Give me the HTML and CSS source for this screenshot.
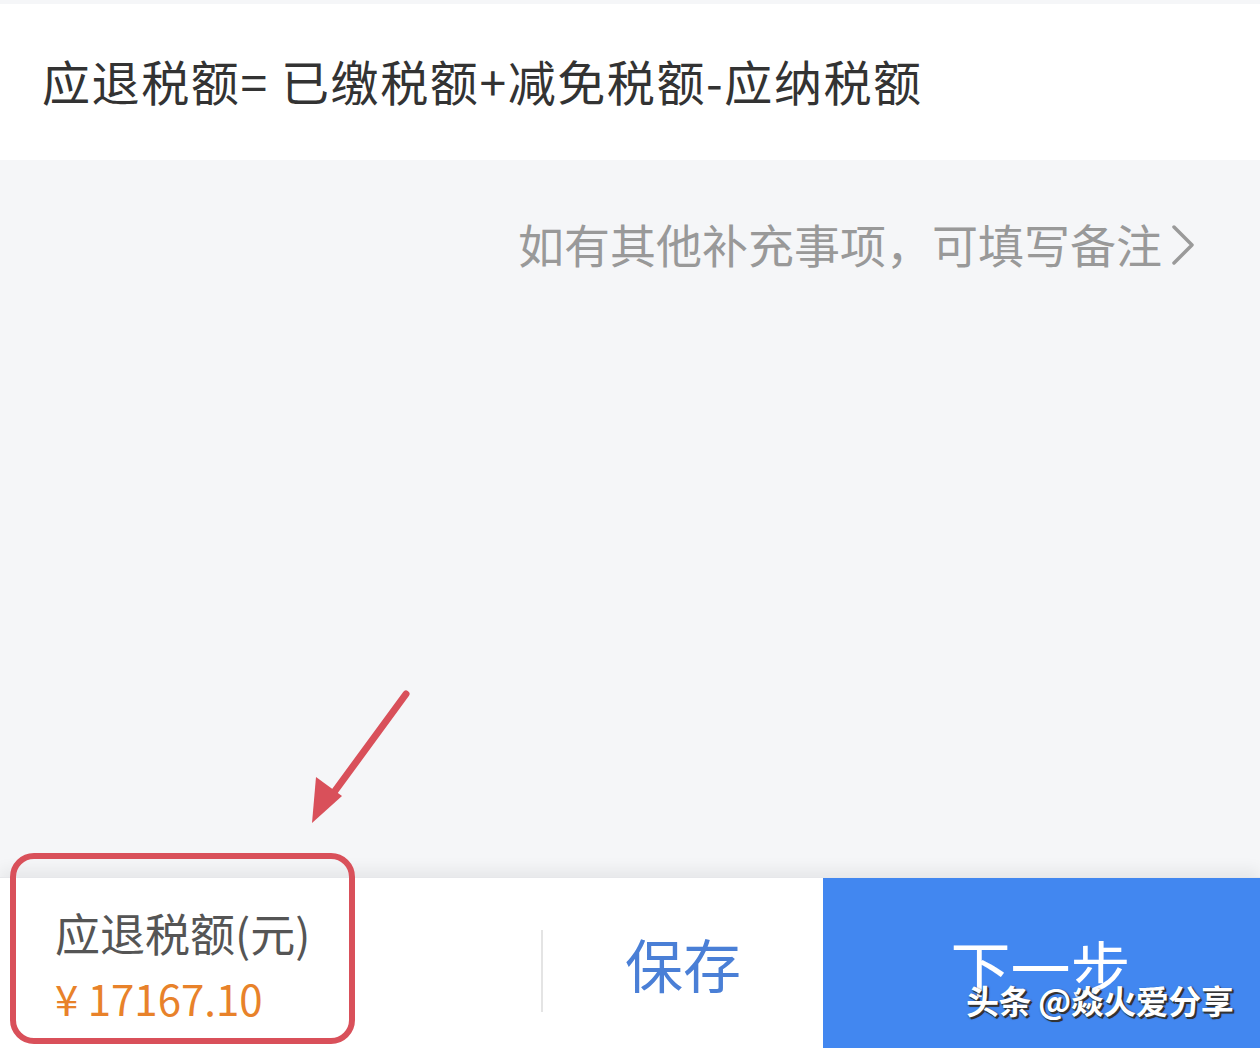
FILE: index.html
```html
<!DOCTYPE html>
<html lang="zh-CN">
<head>
    <meta charset="UTF-8">
    <meta name="viewport" content="width=device-width, initial-scale=1.0">
    <title>应退税额</title>
    <link rel="stylesheet" href="styles.css">
</head>
<body>
    <div class="page">
        <div class="formula">
            <p>应退税额= 已缴税额+减免税额-应纳税额</p>
        </div>

        <div class="content">
            <div class="note">
                <span>如有其他补充事项，可填写备注</span>
                <svg class="chevron" width="26" height="40" viewBox="0 0 26 40">
                    <path d="M4 2 L22 20 L4 38" fill="none" stroke="#9a9a9a" stroke-width="3.5" stroke-linecap="round" stroke-linejoin="round"/>
                </svg>
            </div>
        </div>

        <div class="bottom-bar">
            <div class="refund">
                <div class="refund-label">应退税额(元)</div>
                <div class="refund-amount">¥ 17167.10</div>
            </div>
            <div class="save">
                <span>保存</span>
            </div>
            <div class="next">
                <span>下一步</span>
            </div>
        </div>

        <!-- annotation overlays -->
        <svg class="arrow" width="120" height="150" viewBox="0 0 120 150">
            <line x1="114" y1="14" x2="40" y2="115" stroke="#d9505a" stroke-width="7" stroke-linecap="round"/>
            <polygon points="20,143 24,97 50,116" fill="#d9505a"/>
        </svg>
        <div class="highlight"></div>
        <div class="watermark">头条 @焱火爱分享</div>
    </div>
</body>
</html>
```

FILE: styles.css
```css
* {
    box-sizing: border-box;
    margin: 0;
    padding: 0;
}

body {
    font-family: "Noto Sans CJK SC", "Noto Sans", sans-serif;
    background: #f5f6f8;
    width: 1260px;
    height: 1048px;
    overflow: hidden;
}

.page {
    position: relative;
    height: 1048px;
    display: flex;
    flex-direction: column;
    padding-top: 4px;
}

.formula {
    background: #fff;
    height: 156px;
    display: flex;
    align-items: center;
    padding-left: 42px;
}

.formula p {
    font-size: 48px;
    color: #333;
    letter-spacing: 1.6px;
    margin-top: -4px;
}

.content {
    flex: 1;
    padding-top: 50px;
    padding-right: 64px;
}

.note {
    display: flex;
    justify-content: flex-end;
    align-items: center;
    gap: 8px;
    color: #999;
    font-size: 46px;
}

.chevron {
    margin-top: 4px;
}

.bottom-bar {
    height: 171px;
    display: flex;
    background: #fff;
    box-shadow: 0 -8px 14px rgba(0, 0, 0, 0.06);
    border-top: 1px solid #e6e7ea;
}

.refund {
    width: 541px;
    padding: 26px 0 0 55px;
}

.refund-label {
    font-size: 45px;
    color: #555;
    line-height: 1.3;
}

.refund-amount {
    font-size: 42px;
    color: #e8822a;
    line-height: 1.2;
    margin-top: 10px;
}

.save {
    width: 282px;
    display: flex;
    align-items: center;
    justify-content: center;
    position: relative;
}

.save::before {
    content: "";
    position: absolute;
    left: 0;
    top: 52px;
    width: 2px;
    height: 82px;
    background: #e4e4e4;
}

.save span {
    font-size: 58px;
    color: #4a7fd6;
    margin-left: 2px;
}

.next {
    flex: 1;
    background: #4287f0;
    display: flex;
    justify-content: center;
    padding-top: 52px;
}

.next span {
    font-size: 60px;
    color: #fff;
    line-height: 1.2;
    margin-right: 2px;
}

.arrow {
    position: absolute;
    left: 292px;
    top: 680px;
}

.highlight {
    position: absolute;
    left: 10px;
    top: 853px;
    width: 345px;
    height: 191px;
    border: 6px solid #d9505a;
    border-radius: 24px;
}

.watermark {
    position: absolute;
    left: 966px;
    top: 976px;
    font-size: 33px;
    font-weight: bold;
    color: #fff;
    text-shadow: 2px 2px 0 #333, 1px 1px 2px #000;
    letter-spacing: -0.5px;
}
```
